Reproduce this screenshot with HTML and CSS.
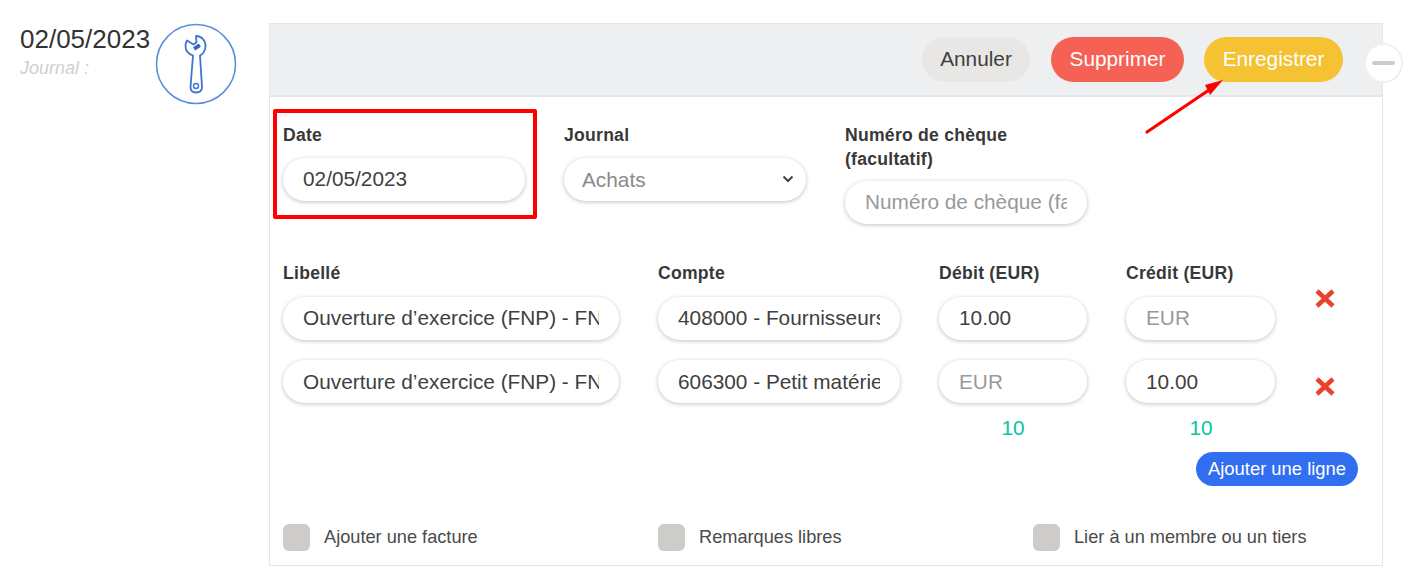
FILE: index.html
```html
<!DOCTYPE html>
<html lang="fr">
<head>
<meta charset="utf-8">
<title>Journal</title>
<link rel="stylesheet" href="styles.css">
</head>
<body>
<div class="page">
  <aside class="side">
    <div class="side-text">
      <div class="side-date">02/05/2023</div>
      <div class="side-journal">Journal :</div>
    </div>
    <div class="side-icon">
      <svg width="82" height="82" viewBox="0 0 82 82" fill="none">
        <circle cx="41" cy="41" r="39.5" stroke="#5b8fdc" stroke-width="1.6"/>
        <path d="M32 17.5 L38.500 21.500 L41.500 19.500 L41 13 C47 13 51 18 50.500 24 C50 28 48 31 45 32.500 L47 64 C47 67.500 44.500 69.500 41 69.500 C37.500 69.500 35.500 67.500 35.500 64 L38 32.500 C33.500 31 30.500 27.500 30.500 23 C30.500 21 31 19 32 17.500 Z" stroke="#3f74cf" stroke-width="1.800" stroke-linejoin="round"/>
        <rect x="38.500" y="22" width="7" height="4" rx="1" transform="rotate(-32 42 24)" fill="#2f66c4"/>
        <circle cx="41" cy="63" r="2.500" stroke="#3f74cf" stroke-width="1.400"/>
      </svg>
    </div>
  </aside>
  <main class="panel">
    <header class="panel-head">
      <button class="btn btn-cancel" type="button">Annuler</button>
      <button class="btn btn-delete" type="button">Supprimer</button>
      <button class="btn btn-save" type="button">Enregistrer</button>
    </header>
    <form class="panel-body">
      <div class="top-row">
        <label class="field"><span class="lbl">Date</span><input class="inp" value="02/05/2023"></label>
        <label class="field"><span class="lbl">Journal</span><select class="inp sel"><option>Achats</option></select></label>
        <label class="field"><span class="lbl">Numéro de chèque (facultatif)</span><input class="inp" placeholder="Numéro de chèque (facultatif)"></label>
      </div>
      <div class="lines">
        <span class="lbl">Libellé</span><span class="lbl">Compte</span><span class="lbl">Débit (EUR)</span><span class="lbl">Crédit (EUR)</span><span></span>

        <input class="inp" value="Ouverture d’exercice (FNP) - FNP"><input class="inp" value="408000 - Fournisseurs"><input class="inp" value="10.00"><input class="inp" placeholder="EUR">
        <svg class="del" width="22" height="21" viewBox="0 0 22 21"><path d="M3 3 L19 18 M19 3 L3 18" stroke="#e8432a" stroke-width="4.500"/></svg>

        <input class="inp" value="Ouverture d’exercice (FNP) - FNP"><input class="inp" value="606300 - Petit matériel"><input class="inp" placeholder="EUR"><input class="inp" value="10.00">
        <svg class="del del-low" width="22" height="21" viewBox="0 0 22 21"><path d="M3 3 L19 18 M19 3 L3 18" stroke="#e8432a" stroke-width="4.500"/></svg>

        <span></span><span></span><span class="total">10</span><span class="total">10</span><span></span>
      </div>
      <div class="add-row"><button class="btn-add" type="button">Ajouter une ligne</button></div>
      <div class="checks">
        <label class="check"><span class="box"></span>Ajouter une facture</label>
        <label class="check"><span class="box"></span>Remarques libres</label>
        <label class="check"><span class="box"></span>Lier à un membre ou un tiers</label>
      </div>
    </form>
  </main>
</div>
<div class="collapse"><span class="collapse-bar"></span></div>
<div class="highlight"></div>
<svg class="arrow" width="90" height="70" viewBox="0 0 90 70" fill="none">
  <path d="M6 60 L68 18" stroke="#ff0000" stroke-width="3.200" stroke-linecap="round"/>
  <path d="M82 8 L64 13 L69 23 Z" fill="#ff0000"/>
</svg>
</body>
</html>
```
FILE: styles.css
```css
* { box-sizing: border-box; }
html, body { margin: 0; padding: 0; background: #fff; overflow: hidden; }
body {
  position: relative;
  width: 1408px;
  height: 573px;
  font-family: "Liberation Sans", Arial, sans-serif;
  color: #3a3a3a;
}
.page {
  display: flex;
  align-items: flex-start;
  padding: 23px 25px 0 20px;
}
.side {
  width: 249px;
  flex: none;
  display: flex;
  align-items: flex-start;
}
.side-text { width: 135px; flex: none; }
.side-date { font-size: 26px; line-height: 32px; color: #333; white-space: nowrap; }
.side-journal { font-size: 18px; line-height: 20px; font-style: italic; color: #cfcfcc; margin-top: 3px; }
.side-icon { height: 82px; }
.side-icon svg { display: block; }
.panel {
  width: 1114px;
  height: 543px;
  border: 1px solid #e4e5e6;
  flex: none;
}
.panel-head {
  height: 73px;
  background: #eeeff1;
  border-bottom: 2px solid #e4e5e6;
  display: flex;
  align-items: flex-start;
  justify-content: flex-end;
  padding: 13px 39px 0 0;
  gap: 21px;
}
.btn {
  height: 45px;
  border: 0;
  border-radius: 23px;
  font-family: inherit;
  font-size: 20.8px;
  padding: 0 0 2px;
}
.btn-cancel { width: 108px; background: #e8e7e5; color: #3f3f3f; }
.btn-delete { width: 133px; background: #f66155; color: #fff; }
.btn-save { width: 139px; background: #f5c233; color: #fff; margin-left: -1px; }
.panel-body { padding: 27px 24px 0 13px; }
.top-row {
  display: grid;
  grid-template-columns: repeat(3, 242px);
  column-gap: 39px;
}
.field { display: flex; flex-direction: column; }
.lbl {
  display: block;
  font-size: 17.6px;
  letter-spacing: .25px;
  line-height: 23.5px;
  font-weight: 700;
  color: #383838;
}
.field .lbl { margin-bottom: 10px; }
.inp {
  width: 100%;
  height: 43px;
  border: 0;
  border-radius: 22px;
  background: #fff;
  box-shadow: 0 1px 4px rgba(0, 0, 0, .25);
  font-family: inherit;
  font-size: 20.8px;
  color: #3f3f3f;
  padding: 0 20px 1px;
  outline: 0;
}
.field:first-child .inp { padding-bottom: 0; }
.inp::placeholder { color: #999; opacity: 1; }
.sel {
  appearance: none;
  color: #8a8a8a;
  padding: 0 30px 0 18px;
  background-image: url("data:image/svg+xml,%3Csvg xmlns='http://www.w3.org/2000/svg' width='12' height='8' viewBox='0 0 12 8'%3E%3Cpath d='M1.500 1.500 L6 6 L10.500 1.500' fill='none' stroke='%23444' stroke-width='2'/%3E%3C/svg%3E");
  background-repeat: no-repeat;
  background-position: right 12px center;
}
.lines {
  display: grid;
  grid-template-columns: 336px 242px 148px 149px 1fr;
  column-gap: 39px;
  margin-top: 38px;
}
.lines > .lbl { height: 24px; margin-bottom: 11px; }
.lines > .inp { margin-bottom: 20px; }
.lines > .inp:nth-of-type(n+5) { padding-bottom: 0; }
.del { margin-top: -9px; }
.del-low { margin-top: 16px; }
.total {
  font-size: 20.8px;
  line-height: 24px;
  color: #0bc2a2;
  text-align: center;
  width: 148px;
  margin-top: -7px;
}
.total + .total { width: 150px; }
.add-row { display: flex; justify-content: flex-end; margin-top: 12px; }
.btn-add {
  width: 162px;
  height: 34px;
  border: 0;
  border-radius: 17px;
  background: #326ff0;
  color: #fff;
  font-family: inherit;
  font-size: 18.400px;
  padding: 0;
}
.checks {
  display: grid;
  grid-template-columns: 375px 375px 1fr;
  margin-top: 38px;
}
.check {
  display: flex;
  align-items: center;
  gap: 14px;
  font-size: 18.200px;
  color: #4a4a4a;
}
.box {
  width: 27px;
  height: 27px;
  border-radius: 6px;
  background: #cdccc8;
  flex: none;
}
.collapse {
  position: absolute;
  left: 1364px;
  top: 43px;
  width: 39px;
  height: 40px;
  border-radius: 50%;
  background: #fff;
  border: 2px solid #f0f0ef;
  display: flex;
  align-items: center;
  justify-content: center;
}
.collapse-bar { width: 23px; height: 4px; border-radius: 2px; background: #cdccc8; }
.highlight {
  position: absolute;
  left: 273px;
  top: 109px;
  width: 264px;
  height: 110px;
  border: 4px solid #ff0000;
  border-radius: 2px;
}
.arrow { position: absolute; left: 1141px; top: 72px; }
```
